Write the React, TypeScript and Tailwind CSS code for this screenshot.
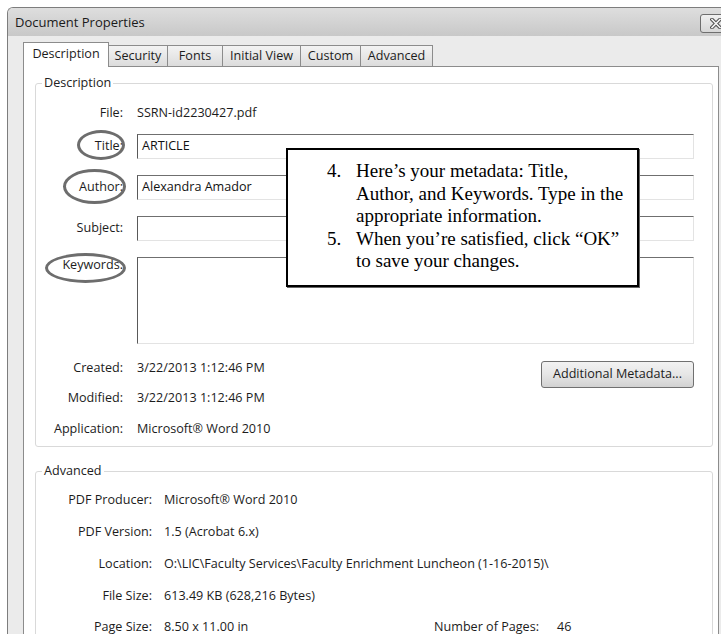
import React from "react";

type Row = { label: string; value: string };

const advancedRows: Row[] = [
  { label: "PDF Producer:", value: "Microsoft® Word 2010" },
  { label: "PDF Version:", value: "1.5 (Acrobat 6.x)" },
  { label: "Location:", value: "O:\\LIC\\Faculty Services\\Faculty Enrichment Luncheon (1-16-2015)\\" },
  { label: "File Size:", value: "613.49 KB (628,216 Bytes)" },
];

const tabs = [
  { name: "Description", w: "w-[86px]" },
  { name: "Security", w: "w-[60px]" },
  { name: "Fonts", w: "w-[56px]" },
  { name: "Initial View", w: "w-[79px]" },
  { name: "Custom", w: "w-[61px]" },
  { name: "Advanced", w: "w-[73px]" },
];

function TextBox({ value, tall }: { value?: string; tall?: boolean }) {
  return (
    <div
      className={`${tall ? "h-[87px]" : "h-[25px]"} flex-1 border border-t-[#6f6f6f] border-l-[#595959] border-r-[#e3e3e3] border-b-[#e3e3e3] bg-white px-[4px] leading-[22px] text-[#111]`}
    >
      {value}
    </div>
  );
}

function Legend({ text }: { text: string }) {
  return (
    <span className="absolute -top-[10px] left-[6px] bg-white px-[2px] leading-[18px] text-[#222]">
      {text}
    </span>
  );
}

function Oval({ className }: { className: string }) {
  return <div className={`absolute rounded-[50%] border-[3px] border-[#6d6d6d] ${className}`} />;
}

function CloseButton() {
  return (
    <div className="flex h-[19px] w-[44px] items-center rounded-[3px] border border-[#6e6e6e] bg-gradient-to-b from-[#f0f0f0] to-[#d6d6d6] pl-[9px]">
      <svg width="12" height="11" viewBox="0 0 12 11">
        <path d="M2 1.5 L10 9.5 M10 1.5 L2 9.5" stroke="#4a4a4a" strokeWidth="3.6" strokeLinecap="square" />
        <path d="M2 1.5 L10 9.5 M10 1.5 L2 9.5" stroke="#f4f4f4" strokeWidth="1.6" strokeLinecap="square" />
      </svg>
    </div>
  );
}

export default function App() {
  return (
    <div className="relative h-[634px] w-[721px] overflow-hidden bg-white font-['Open_Sans',sans-serif] text-[12.6px] text-[#1c1c1c]">
      <div className="ml-[7px] mt-[7px] flex h-[627px] flex-col overflow-hidden rounded-tl-[6px] border-l border-t border-[#7d7d7d] bg-[#ebebeb]">
        {/* title bar */}
        <div className="flex h-[28px] shrink-0 items-center bg-gradient-to-b from-[#dedede] to-[#c8c8c8] pl-[7px] pt-[2px]">
          <span className="text-[13px] text-[#1a1a1a]">Document Properties</span>
          <div className="-mr-[23px] ml-auto shrink-0">
            <CloseButton />
          </div>
        </div>

        {/* tabs */}
        <div className="ml-[15px] mt-[6px] flex h-[24px] items-end">
          {tabs.map((t, i) =>
            i === 0 ? (
              <div
                key={t.name}
                className={`${t.w} relative z-10 -mb-px flex h-[25px] items-start justify-center border border-b-0 border-[#8c8c8c] bg-white pt-[2px]`}
              >
                {t.name}
              </div>
            ) : (
              <div
                key={t.name}
                className={`${t.w} -ml-px flex h-[21px] items-center justify-center border border-b-0 border-[#8c8c8c] bg-gradient-to-b from-[#f3f3f3] to-[#dcdcdc]`}
              >
                {t.name}
              </div>
            )
          )}
        </div>

        {/* tab page */}
        <div className="ml-[15px] w-[696px] flex-1 border border-[#8c8c8c] bg-white pl-[11px] pr-[5px] pt-[16px]">
          {/* Description group */}
          <div className="relative rounded-[3px] border border-[#d9d9d9] pb-[7px] pr-[18px] pt-[19px]">
            <Legend text="Description" />
            <div className="flex h-[20px] items-center">
              <span className="w-[87px] shrink-0 text-right">File:</span>
              <span className="ml-[14px]">SSRN-id2230427.pdf</span>
            </div>
            <div className="mt-[11px] flex items-center">
              <span className="w-[87px] shrink-0 text-right">Title:</span>
              <div className="ml-[14px] flex flex-1">
                <TextBox value="ARTICLE" />
              </div>
            </div>
            <div className="mt-[16px] flex items-center">
              <span className="w-[87px] shrink-0 text-right">Author:</span>
              <div className="ml-[14px] flex flex-1">
                <TextBox value="Alexandra Amador" />
              </div>
            </div>
            <div className="mt-[16px] flex items-center">
              <span className="w-[87px] shrink-0 text-right">Subject:</span>
              <div className="ml-[14px] flex flex-1">
                <TextBox />
              </div>
            </div>
            <div className="mt-[16px] flex items-start">
              <span className="-mt-[2px] w-[87px] shrink-0 text-right leading-[20px]">Keywords:</span>
              <div className="ml-[14px] flex flex-1">
                <TextBox tall />
              </div>
            </div>

            <div className="mt-[14px] flex items-start">
              <div className="flex-1">
                {[
                  ["Created:", "3/22/2013 1:12:46 PM"],
                  ["Modified:", "3/22/2013 1:12:46 PM"],
                  ["Application:", "Microsoft® Word 2010"],
                ].map(([l, v], i) => (
                  <div key={l} className={`flex h-[20px] items-center ${i === 0 ? "" : i === 1 ? "mt-[10px]" : "mt-[11px]"}`}>
                    <span className="w-[87px] shrink-0 text-right">{l}</span>
                    <span className="ml-[14px]">{v}</span>
                  </div>
                ))}
              </div>
              <button className="mt-[3px] h-[27px] w-[153px] rounded-[3px] border border-[#707070] bg-gradient-to-b from-[#f2f2f2] via-[#e6e6e6] to-[#d2d2d2] text-[#1c1c1c]">
                Additional Metadata...
              </button>
            </div>
          </div>

          {/* Advanced group */}
          <div className="relative mt-[24px] h-[200px] rounded-[3px] border border-[#d9d9d9] pt-[18px]">
            <Legend text="Advanced" />
            {advancedRows.map((r, i) => (
              <div key={r.label} className={`flex h-[20px] items-center ${i === 0 ? "" : "mt-[12px]"}`}>
                <span className="w-[116px] shrink-0 text-right">{r.label}</span>
                <span className="ml-[12px] whitespace-nowrap">{r.value}</span>
              </div>
            ))}
            <div className="mt-[11px] flex h-[20px] items-center">
              <span className="w-[116px] shrink-0 text-right">Page Size:</span>
              <span className="ml-[12px] w-[269px]">8.50 x 11.00 in</span>
              <span className="w-[106px] text-right">Number of Pages:</span>
              <span className="ml-[18px]">46</span>
            </div>
          </div>
        </div>
      </div>

      {/* annotation circles around the metadata labels */}
      <Oval className="left-[77px] top-[130px] h-[30px] w-[48px]" />
      <Oval className="left-[63px] top-[169px] h-[35px] w-[63px]" />
      <Oval className="left-[45px] top-[253px] h-[30px] w-[81px]" />

      {/* instruction callout */}
      <div className="absolute left-[286px] top-[148px] h-[139px] w-[353px] border-2 border-black bg-white pl-[39px] pt-[10px] font-['Liberation_Serif',serif] text-[19px] leading-[22.6px] text-black shadow-[1px_1px_0_#666]">
        <div className="flex">
          <span className="w-[29px] shrink-0">4.</span>
          <span className="w-[270px]">Here’s your metadata: Title, Author, and Keywords. Type in the appropriate information.</span>
        </div>
        <div className="flex">
          <span className="w-[29px] shrink-0">5.</span>
          <span className="w-[270px]">When you’re satisfied, click “OK” to save your changes.</span>
        </div>
      </div>
    </div>
  );
}
